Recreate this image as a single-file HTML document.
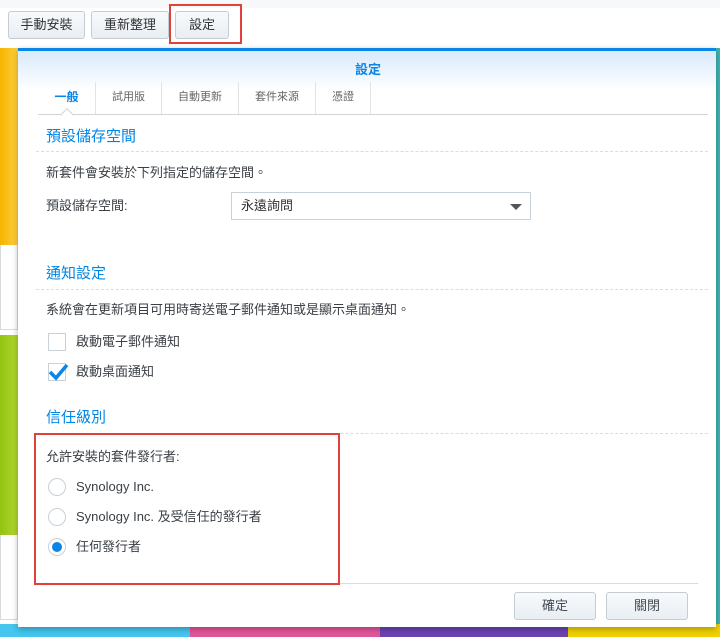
<!DOCTYPE html>
<html><head><meta charset="utf-8"><style>
*{margin:0;padding:0;box-sizing:border-box}
body{width:720px;height:637px;overflow:hidden;position:relative;background:#fff;font-family:"Liberation Sans","Noto Sans CJK TC",sans-serif;font-size:13px;color:#414b55}
.abs{position:absolute}
.btn{position:absolute;top:11px;height:28px;border:1px solid #c6ccd3;border-radius:3px;background:linear-gradient(#f8fafc,#e9eef3);text-align:center;line-height:26px;font-size:13px;color:#333}
.tab{position:absolute;top:82px;height:32px;line-height:30px;font-size:11px;color:#666;text-align:center;border-right:1px solid #e0e4e8}
.h{position:absolute;left:46px;font-size:15px;color:#0086e5;line-height:20px}
.dash{position:absolute;left:36px;width:672px;border-top:1px dashed #d6dde4}
.t{position:absolute;font-size:13px;color:#3a3f45;line-height:18px;white-space:nowrap}
.radio{position:absolute;left:48px;width:18px;height:18px;border:1px solid #c8d0d8;border-radius:50%;background:#fff}
.cb{position:absolute;left:48px;width:18px;height:18px;border:1px solid #c8d0d8;background:#fff}
</style></head><body>
<div class="abs" style="left:0;top:0;width:720px;height:8px;background:#f6f8fa"></div>
<div class="btn" style="left:8px;width:77px">手動安裝</div>
<div class="btn" style="left:91px;width:78px">重新整理</div>
<div class="btn" style="left:175px;width:54px">設定</div>
<div class="abs" style="left:169px;top:4px;width:73px;height:40px;border:2px solid #e0413a"></div>
<div class="abs" style="left:0;top:48px;width:18px;height:197px;background:linear-gradient(90deg,#f5b400,#ffd040)"></div>
<div class="abs" style="left:0;top:245px;width:18px;height:85px;background:#fff;border:1px solid #d6dbe0;border-top:0"></div>
<div class="abs" style="left:0;top:335px;width:18px;height:200px;background:linear-gradient(90deg,#93c312,#b0d82e)"></div>
<div class="abs" style="left:0;top:535px;width:18px;height:85px;background:#fff;border:1px solid #d6dbe0;border-top:0"></div>
<div class="abs" style="left:0;top:624px;width:190px;height:13px;background:#44c6ef"></div>
<div class="abs" style="left:190px;top:624px;width:190px;height:13px;background:#e2559a"></div>
<div class="abs" style="left:380px;top:624px;width:188px;height:13px;background:#6b43b2"></div>
<div class="abs" style="left:568px;top:624px;width:152px;height:13px;background:#f0d000"></div>
<div class="abs" style="left:716px;top:48px;width:4px;height:576px;background:#3fb3b3"></div>
<div class="abs" style="left:18px;top:48px;width:698px;height:579px;background:#fff;box-shadow:0 2px 6px rgba(0,0,0,.3);border-top:3px solid #0a86e8">
<div style="height:40px;background:linear-gradient(#d8eafb,#fff)"></div>
</div>
<div class="abs" style="left:355px;top:59px;font-size:13px;font-weight:bold;color:#0a86e8">設定</div>
<div class="abs" style="left:38px;top:82px;width:670px;height:33px;border-bottom:1px solid #d0d4d8"></div>
<div class="tab" style="left:38px;width:58px;color:#0a86e8;font-weight:bold;font-size:12px">一般</div>
<div class="tab" style="left:96px;width:66px">試用版</div>
<div class="tab" style="left:162px;width:77px">自動更新</div>
<div class="tab" style="left:239px;width:77px">套件來源</div>
<div class="tab" style="left:316px;width:55px">憑證</div>
<div class="abs" style="left:62px;top:110px;width:10px;height:10px;background:#fff;border-left:1px solid #d0d4d8;border-top:1px solid #d0d4d8;transform:rotate(45deg)"></div>

<div class="h" style="top:127px">預設儲存空間</div>
<div class="dash" style="top:151px"></div>
<div class="t" style="left:46px;top:164px">新套件會安裝於下列指定的儲存空間。</div>
<div class="t" style="left:46px;top:197px">預設儲存空間:</div>
<div class="abs" style="left:231px;top:192px;width:300px;height:28px;border:1px solid #c8d0d8;font-size:13px;line-height:26px;padding-left:9px;color:#333">永遠詢問
<div class="abs" style="right:8px;top:11px;width:0;height:0;border-left:6px solid transparent;border-right:6px solid transparent;border-top:6px solid #555"></div></div>

<div class="h" style="top:264px">通知設定</div>
<div class="dash" style="top:289px"></div>
<div class="t" style="left:46px;top:301px">系統會在更新項目可用時寄送電子郵件通知或是顯示桌面通知。</div>
<div class="cb" style="top:333px"></div>
<div class="t" style="left:76px;top:333px">啟動電子郵件通知</div>
<div class="cb" style="top:363px"></div>
<svg class="abs" style="left:46px;top:358px" width="24" height="24"><path d="M4 14 L10 20 L21 7" stroke="#0a86e8" stroke-width="3.5" fill="none"/></svg>
<div class="t" style="left:76px;top:363px">啟動桌面通知</div>

<div class="h" style="top:408px">信任級別</div>
<div class="dash" style="top:433px"></div>
<div class="abs" style="left:34px;top:433px;width:306px;height:152px;border:2px solid #e0413a;background:#fff"></div>
<div class="t" style="left:46px;top:448px">允許安裝的套件發行者:</div>
<div class="radio" style="top:478px"></div>
<div class="t" style="left:76px;top:478px">Synology Inc.</div>
<div class="radio" style="top:508px"></div>
<div class="t" style="left:76px;top:508px">Synology Inc. 及受信任的發行者</div>
<div class="radio" style="top:538px"><div style="position:absolute;left:3px;top:3px;width:10px;height:10px;border-radius:50%;background:#0a86e8"></div></div>
<div class="t" style="left:76px;top:538px">任何發行者</div>

<div class="abs" style="left:340px;top:583px;width:358px;border-top:1px solid #d8dce0"></div>
<div class="abs" style="left:514px;top:592px;width:82px;height:28px;border:1px solid #c6ccd3;border-radius:3px;background:linear-gradient(#f8fafc,#e9eef3);text-align:center;line-height:26px;font-size:13px">確定</div>
<div class="abs" style="left:606px;top:592px;width:82px;height:28px;border:1px solid #c6ccd3;border-radius:3px;background:linear-gradient(#f8fafc,#e9eef3);text-align:center;line-height:26px;font-size:13px">關閉</div>
</body></html>
